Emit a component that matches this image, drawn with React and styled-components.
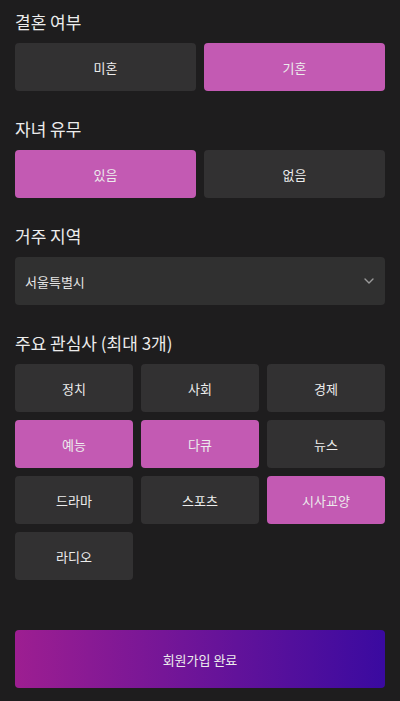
import React, { useState } from "react";
import styled, { createGlobalStyle } from "styled-components";

const Global = createGlobalStyle`
  html, body { margin: 0; padding: 0; background: #1e1d1e; }
  body { font-family: "Noto Sans CJK KR", "Noto Sans", sans-serif; color: #e8e8e8; }
  * { box-sizing: border-box; }
`;

const Page = styled.div`
  padding: 11px 15px 0;
  min-height: 701px;
  background: #1e1d1e;
  display: flex;
  flex-direction: column;
`;

const Section = styled.section`
  display: flex;
  flex-direction: column;
  margin-bottom: 27px;
`;

const Heading = styled.h2`
  margin: 0 0 10px;
  font-size: 17px;
  line-height: 22px;
  font-weight: 400;
  color: #ececec;
`;

const Grid = styled.div`
  display: grid;
  grid-template-columns: repeat(${(p) => p.$cols}, 1fr);
  gap: 8px;
`;

const Choice = styled.button`
  height: 48px;
  border: none;
  border-radius: 4px;
  background: ${(p) => (p.$active ? "#c35ab3" : "#323132")};
  color: #ececec;
  font-family: inherit;
  font-size: 13px;
  font-weight: 400;
  padding: 0;
  cursor: pointer;
`;

const Select = styled.div`
  height: 48px;
  border-radius: 4px;
  background: #303030;
  display: flex;
  align-items: center;
  justify-content: space-between;
  padding: 0 11px 0 10px;
  font-size: 13px;
  color: #e6e6e6;
`;

const Submit = styled.button`
  margin-top: 23px;
  height: 58px;
  border: none;
  border-radius: 4px;
  background: linear-gradient(90deg, #9d1e91 0%, #3a0aa0 100%);
  color: #ececec;
  font-family: inherit;
  font-size: 13px;
  font-weight: 400;
  cursor: pointer;
`;

const Chevron = () => (
  <svg width="10" height="6" viewBox="0 0 10 6" fill="none">
    <path d="M1 1l4 4 4-4" stroke="#9a9a9a" strokeWidth="1.4" strokeLinecap="round" strokeLinejoin="round" />
  </svg>
);

const interests = ["정치", "사회", "경제", "예능", "다큐", "뉴스", "드라마", "스포츠", "시사교양", "라디오"];

export default function App() {
  const [married, setMarried] = useState("기혼");
  const [kids, setKids] = useState("있음");
  const [picked, setPicked] = useState(["예능", "다큐", "시사교양"]);

  const toggle = (x) =>
    setPicked((p) => (p.includes(x) ? p.filter((i) => i !== x) : p.length < 3 ? [...p, x] : p));

  return (
    <>
      <Global />
      <Page>
        <Section>
          <Heading>결혼 여부</Heading>
          <Grid $cols={2}>
            {["미혼", "기혼"].map((o) => (
              <Choice key={o} $active={married === o} onClick={() => setMarried(o)}>
                {o}
              </Choice>
            ))}
          </Grid>
        </Section>
        <Section>
          <Heading>자녀 유무</Heading>
          <Grid $cols={2}>
            {["있음", "없음"].map((o) => (
              <Choice key={o} $active={kids === o} onClick={() => setKids(o)}>
                {o}
              </Choice>
            ))}
          </Grid>
        </Section>
        <Section>
          <Heading>거주 지역</Heading>
          <Select>
            <span>서울특별시</span>
            <Chevron />
          </Select>
        </Section>
        <Section>
          <Heading>주요 관심사 (최대 3개)</Heading>
          <Grid $cols={3}>
            {interests.map((o) => (
              <Choice key={o} $active={picked.includes(o)} onClick={() => toggle(o)}>
                {o}
              </Choice>
            ))}
          </Grid>
        </Section>
        <Submit>회원가입 완료</Submit>
      </Page>
    </>
  );
}
